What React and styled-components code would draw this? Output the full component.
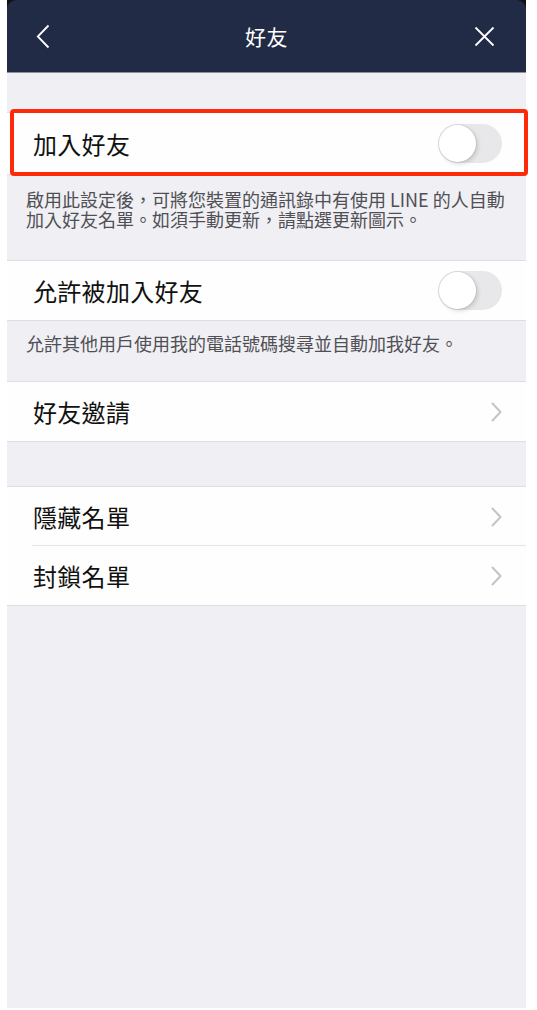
import React, { useState } from 'react'
import styled, { createGlobalStyle } from 'styled-components'

const GlobalStyle = createGlobalStyle`
  html, body {
    margin: 0;
    padding: 0;
    background: #ffffff;
  }
  body {
    font-family: "Noto Sans CJK TC", "Noto Sans", sans-serif;
    -webkit-font-smoothing: antialiased;
  }
`;

const Screen = styled.div`
  width: 519px;
  margin-left: 7px;
  min-height: 1008px;
  background: linear-gradient(#111111 0 10px, #efeff4 10px);
  display: flex;
  flex-direction: column;
`;

const Header = styled.header`
  height: 72px;
  background: #222b45;
  border-radius: 9px 9px 0 0;
  border-bottom: 1px solid #8c90a0;
  display: grid;
  grid-template-columns: 60px 1fr 60px;
  align-items: center;
  color: #ffffff;
`;

const Title = styled.h1`
  margin: 0;
  text-align: center;
  font-size: 21px;
  font-weight: 400;
  letter-spacing: 0.5px;
`;

const IconButton = styled.button`
  background: none;
  border: none;
  padding: 0;
  height: 72px;
  display: flex;
  align-items: center;
  justify-content: ${p => (p.$right ? 'flex-end' : 'flex-start')};
  padding-left: ${p => (p.$right ? '0' : '29px')};
  padding-right: ${p => (p.$right ? '31px' : '0')};
  cursor: pointer;
`;

const Spacer = styled.div`
  height: ${p => p.$h}px;
`;

const Group = styled.div`
  background: #fdfefd;
  border-top: 1px solid #dedee2;
  border-bottom: 1px solid #dedee2;
`;

const Highlighted = styled.div`
  position: relative;
`;

const Marker = styled.div`
  position: absolute;
  top: -3px;
  left: 3px;
  right: -2px;
  bottom: -1px;
  border: 4px solid #ff2a0a;
  border-radius: 4px;
  pointer-events: none;
`;

const Row = styled.div`
  height: ${p => p.$h || 59}px;
  display: flex;
  align-items: center;
  justify-content: space-between;
  padding: 0 24px 0 26px;
  position: relative;

  & + &::before {
    content: '';
    position: absolute;
    top: -1px;
    left: 25px;
    right: 0;
    border-top: 1px solid #e4e4e8;
  }
`;

const Label = styled.span`
  font-size: 24px;
  color: #111111;
  letter-spacing: 0.3px;
`;

const Note = styled.p`
  margin: 0;
  padding: ${p => p.$pad};
  font-size: 18px;
  line-height: 20px;
  color: #4f4f54;
  max-width: 480px;
`;

const Track = styled.button`
  width: 64px;
  height: 39px;
  border-radius: 20px;
  border: none;
  padding: 0;
  background: ${p => (p.$on ? '#4cd964' : '#e8e8eb')};
  position: relative;
  cursor: pointer;
  transition: background 0.2s;
`;

const Knob = styled.span`
  position: absolute;
  top: 1px;
  left: ${p => (p.$on ? '26px' : '1px')};
  width: 37px;
  height: 37px;
  border-radius: 50%;
  background: #ffffff;
  box-shadow: 0 0 0 1px rgba(0, 0, 0, 0.06), 2px 2px 4px rgba(0, 0, 0, 0.14);
  transition: left 0.2s;
`;

function Toggle({ on, onChange }) {
  return (
    <Track $on={on} onClick={() => onChange(!on)}>
      <Knob $on={on} />
    </Track>
  );
}

const Chevron = () => (
  <svg width="11" height="20" viewBox="0 0 11 20">
    <path d="M1.5 1.5 L9.5 10 L1.5 18.5" fill="none" stroke="#c4c4c9" strokeWidth="2" strokeLinecap="round" strokeLinejoin="round" />
  </svg>
);

export default function App() {
  const [autoAdd, setAutoAdd] = useState(false);
  const [allowAdd, setAllowAdd] = useState(false);

  return (
    <Screen>
      <GlobalStyle />
      <Header>
        <IconButton>
          <svg width="14" height="25" viewBox="0 0 14 25">
            <path d="M12.5 1.5 L1.8 12.5 L12.5 23.5" fill="none" stroke="#ffffff" strokeWidth="1.8" />
          </svg>
        </IconButton>
        <Title>好友</Title>
        <IconButton $right>
          <svg width="21" height="21" viewBox="0 0 21 21">
            <path d="M1.5 1.5 L19.5 19.5 M19.5 1.5 L1.5 19.5" fill="none" stroke="#ffffff" strokeWidth="1.8" />
          </svg>
        </IconButton>
      </Header>

      <Spacer $h={39} />
      <Highlighted>
        <Group>
          <Row $h={61}>
            <Label>加入好友</Label>
            <Toggle on={autoAdd} onChange={setAutoAdd} />
          </Row>
        </Group>
        <Marker />
      </Highlighted>
      <Note $pad="14px 20px 31px 19px">
        啟用此設定後，可將您裝置的通訊錄中有使用 LINE 的人自動加入好友名單。如須手動更新，請點選更新圖示。
      </Note>

      <Group>
        <Row>
          <Label>允許被加入好友</Label>
          <Toggle on={allowAdd} onChange={setAllowAdd} />
        </Row>
      </Group>
      <Note $pad="12px 20px 28px 19px">
        允許其他用戶使用我的電話號碼搜尋並自動加我好友。
      </Note>

      <Group>
        <Row>
          <Label>好友邀請</Label>
          <Chevron />
        </Row>
      </Group>

      <Spacer $h={44} />
      <Group>
        <Row>
          <Label>隱藏名單</Label>
          <Chevron />
        </Row>
        <Row>
          <Label>封鎖名單</Label>
          <Chevron />
        </Row>
      </Group>
    </Screen>
  );
}
